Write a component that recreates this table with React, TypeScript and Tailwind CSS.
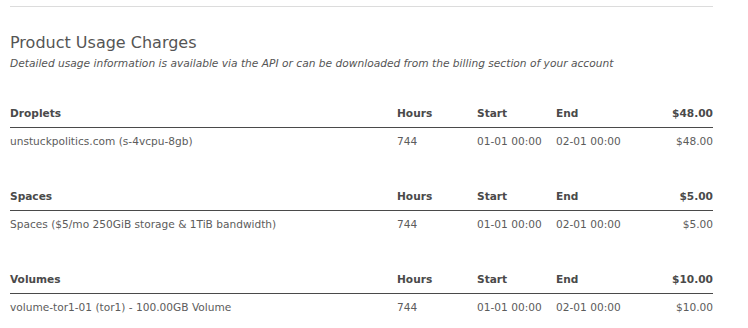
const sections = [
  {
    title: "Droplets",
    total: "$48.00",
    rows: [{ name: "unstuckpolitics.com (s-4vcpu-8gb)", hours: "744", start: "01-01 00:00", end: "02-01 00:00", amount: "$48.00" }],
  },
  {
    title: "Spaces",
    total: "$5.00",
    rows: [{ name: "Spaces ($5/mo 250GiB storage & 1TiB bandwidth)", hours: "744", start: "01-01 00:00", end: "02-01 00:00", amount: "$5.00" }],
  },
  {
    title: "Volumes",
    total: "$10.00",
    rows: [{ name: "volume-tor1-01 (tor1) - 100.00GB Volume", hours: "744", start: "01-01 00:00", end: "02-01 00:00", amount: "$10.00" }],
  },
];

export default function App() {
  return (
    <div className="w-[748px] h-[328px] overflow-hidden bg-white font-['DejaVu_Sans',sans-serif]">
      <div className="ml-[10px] w-[703px] pt-[6px]">
        <div className="border-t border-[#dcdcdc]" />
        <h1 className="mt-[26px] text-[16px] leading-[20px] text-[#555]">Product Usage Charges</h1>
        <p className="mt-[4px] text-[10.65px] leading-[14px] italic text-[#555]">
          Detailed usage information is available via the API or can be downloaded from the billing section of your account
        </p>
        <div className="mt-[35px] flex flex-col gap-[41px]">
          {sections.map((s) => (
            <div key={s.title} className="text-[10.6px] leading-[14px]">
              <div className="grid grid-cols-[387px_80px_79px_80px_77px] border-b border-[#4a4a4a] pb-[7px] font-bold text-[#4a4a4a]">
                <div>{s.title}</div>
                <div>Hours</div>
                <div>Start</div>
                <div>End</div>
                <div className="text-right">{s.total}</div>
              </div>
              {s.rows.map((r, i) => (
                <div key={i} className="grid grid-cols-[387px_80px_79px_80px_77px] pt-[6px] text-[#5c5c5c]">
                  <div>{r.name}</div>
                  <div>{r.hours}</div>
                  <div>{r.start}</div>
                  <div>{r.end}</div>
                  <div className="text-right">{r.amount}</div>
                </div>
              ))}
            </div>
          ))}
        </div>
      </div>
    </div>
  );
}
